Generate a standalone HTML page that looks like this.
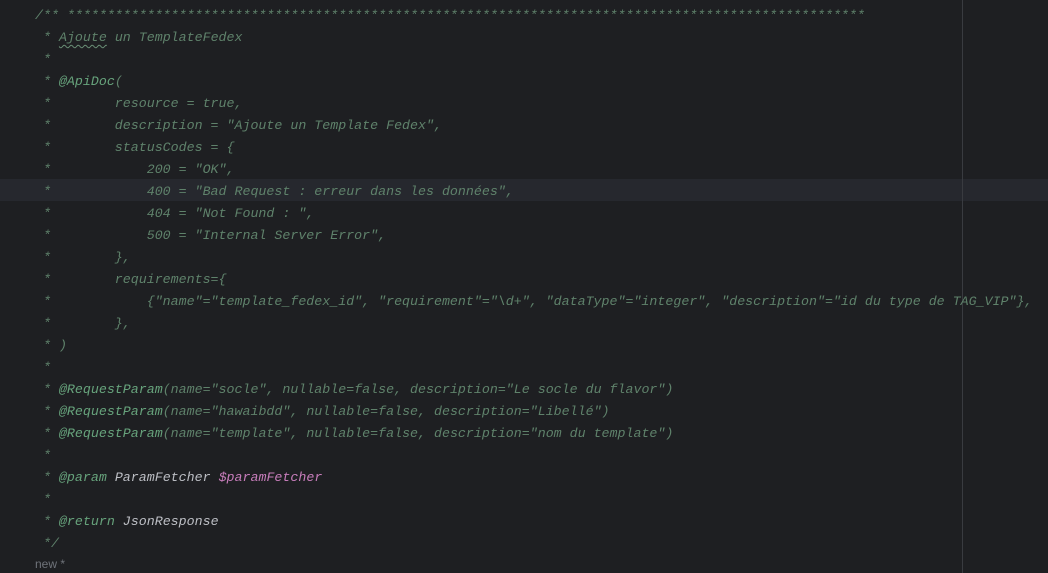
<!DOCTYPE html>
<html><head><meta charset="utf-8"><style>
html,body{margin:0;padding:0;background:#1e1f22;width:1048px;height:573px;overflow:hidden;position:relative}
.code{position:absolute;left:35px;top:5px;font-family:"Liberation Mono",monospace;font-size:13.3px;line-height:22px;font-style:italic;color:#5f826b;white-space:pre}
.hl{position:absolute;left:0;top:179px;width:1048px;height:22px;background:#26282e}
.vr{position:absolute;left:962px;top:0;width:1px;height:573px;background:#393b40}
.t{color:#67a37c}
.w{color:#bcbec4}
.p{color:#c77dbb}
.u{text-decoration:underline wavy #6a8f76;text-decoration-thickness:1px;text-underline-offset:3px}
.new{position:absolute;left:35px;top:557px;font-family:"Liberation Sans",sans-serif;font-size:12px;color:#6f737a}
</style></head><body>
<div class="hl"></div>
<div class="vr"></div>
<div class="code">/** ****************************************************************************************************
 * <span class="u">Ajoute</span> un TemplateFedex
 *
 * <span class="t">@ApiDoc</span>(
 *        resource = true,
 *        description = "Ajoute un Template Fedex",
 *        statusCodes = {
 *            200 = "OK",
 *            400 = "Bad Request : erreur dans les données",
 *            404 = "Not Found : ",
 *            500 = "Internal Server Error",
 *        },
 *        requirements={
 *            {"name"="template_fedex_id", "requirement"="\d+", "dataType"="integer", "description"="id du type de TAG_VIP"},
 *        },
 * )
 *
 * <span class="t">@RequestParam</span>(name="socle", nullable=false, description="Le socle du flavor")
 * <span class="t">@RequestParam</span>(name="hawaibdd", nullable=false, description="Libellé")
 * <span class="t">@RequestParam</span>(name="template", nullable=false, description="nom du template")
 *
 * <span class="t">@param</span> <span class="w">ParamFetcher</span> <span class="p">$paramFetcher</span>
 *
 * <span class="t">@return</span> <span class="w">JsonResponse</span>
 */</div>
<div class="new">new *</div>
</body></html>
